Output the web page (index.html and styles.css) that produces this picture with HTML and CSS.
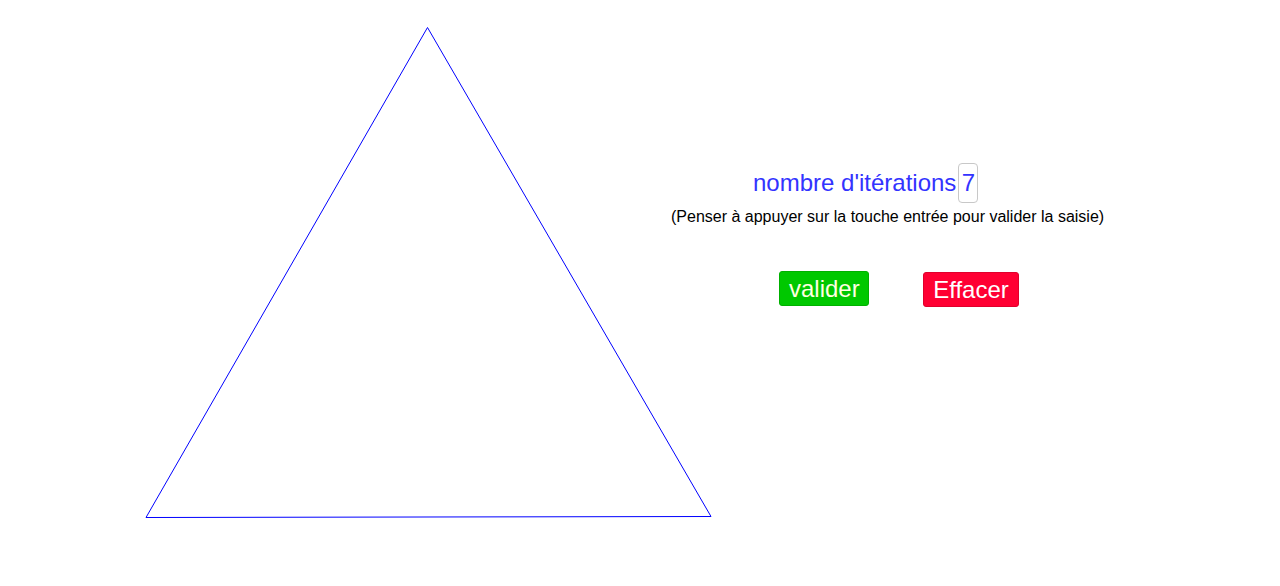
FILE: index.html
```html
<!DOCTYPE html>
<html lang="fr">
<head>
<meta charset="utf-8">
<title>Triangle</title>
<link rel="stylesheet" href="styles.css">
</head>
<body>
<div class="app">
  <svg class="canvas" width="671" height="586" viewBox="0 0 671 586">
    <polygon points="427.5,27.5 146,517.5 711,516.5" fill="none" stroke="#0000ff" stroke-width="1"/>
  </svg>
  <div class="panel">
    <div class="iter-row">
      <span class="iter-label">nombre d'itérations</span>
      <span class="iter-input">7</span>
    </div>
    <div class="hint">(Penser à appuyer sur la touche entrée pour valider la saisie)</div>
    <div class="buttons">
      <button class="btn btn-valider">valider</button>
      <button class="btn btn-effacer">Effacer</button>
    </div>
  </div>
</div>
</body>
</html>
```

FILE: styles.css
```css
html, body {
  margin: 0;
  padding: 0;
  background: #ffffff;
}
body {
  font-family: "Liberation Sans", Arial, sans-serif;
  width: 1280px;
  height: 586px;
  overflow: hidden;
}
.app {
  display: flex;
  flex-direction: row;
  height: 586px;
}
.canvas {
  display: block;
  flex: 0 0 671px;
  overflow: visible;
}
.panel {
  display: flex;
  flex-direction: column;
  align-items: flex-start;
  padding-top: 163px;
}
.iter-row {
  display: flex;
  align-items: center;
  margin-left: 82px;
  height: 40px;
}
.iter-label {
  font-size: 24px;
  color: #3333ff;
  line-height: 28px;
  margin-top: 0;
}
.iter-input {
  box-sizing: border-box;
  width: 20px;
  height: 40px;
  margin-left: 2px;
  border: 1px solid #c8c8c8;
  border-radius: 4px;
  font-size: 24px;
  color: #3333ff;
  display: flex;
  align-items: center;
  justify-content: center;
}
.hint {
  margin-top: 5px;
  font-size: 16px;
  line-height: 18px;
  color: #000000;
}
.buttons {
  display: flex;
  align-items: flex-start;
  margin-top: 45px;
  margin-left: 108px;
  gap: 54px;
}
.btn {
  box-sizing: border-box;
  height: 35px;
  padding: 0 9px;
  font-family: "Liberation Sans", Arial, sans-serif;
  font-size: 24px;
  line-height: 33px;
  border-radius: 3px;
  cursor: pointer;
}
.btn-valider {
  width: 90px;
  background: #00c800;
  border: 1px solid #00b000;
  color: #ffffe0;
}
.btn-effacer {
  width: 96px;
  margin-top: 1px;
  background: #ff0033;
  border: 1px solid #e0002c;
  color: #ffffff;
}
```
